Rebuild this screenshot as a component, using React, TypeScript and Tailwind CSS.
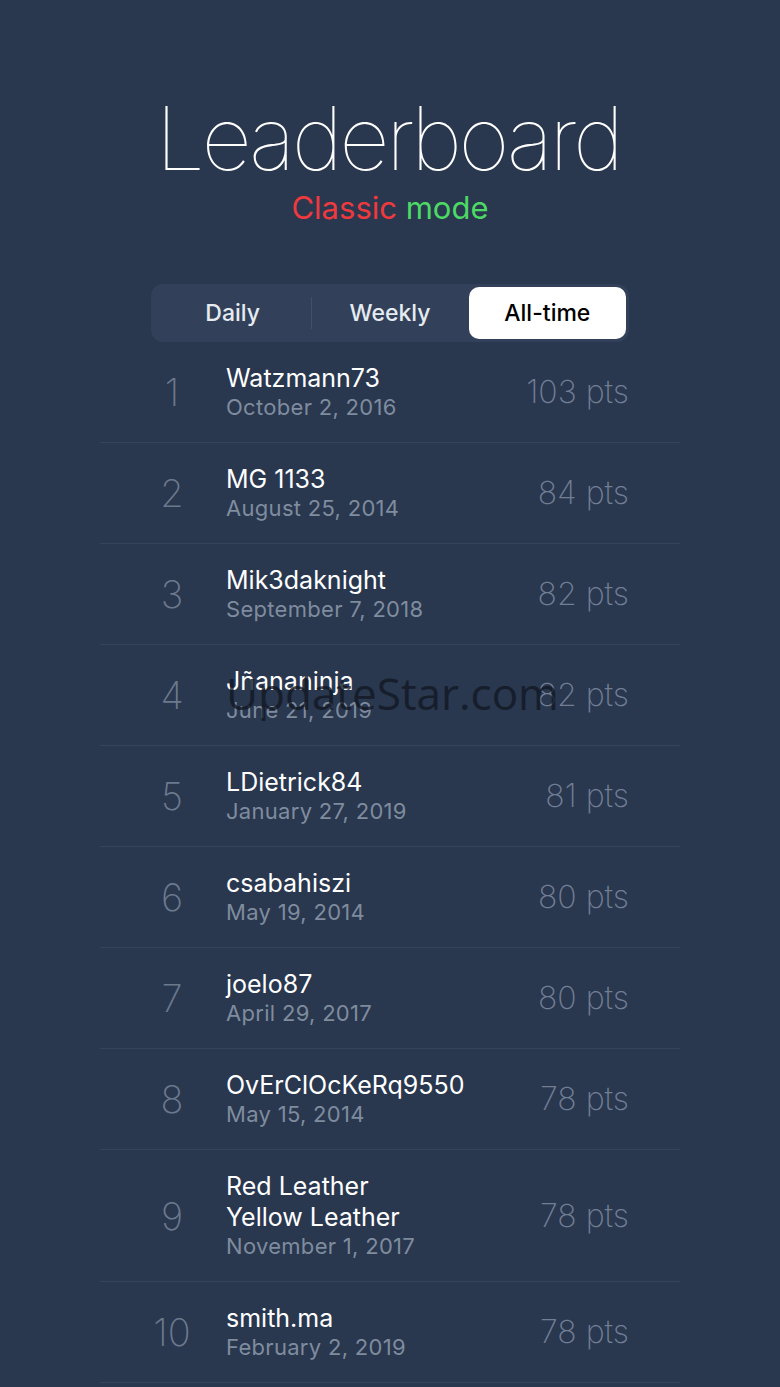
import React from 'react'

type Entry = {
  rank: number
  name: string[]
  date: string
  pts: number
}

const ENTRIES: Entry[] = [
  { rank: 1, name: ['Watzmann73'], date: 'October 2, 2016', pts: 103 },
  { rank: 2, name: ['MG 1133'], date: 'August 25, 2014', pts: 84 },
  { rank: 3, name: ['Mik3daknight'], date: 'September 7, 2018', pts: 82 },
  { rank: 4, name: ['Jñananinja'], date: 'June 21, 2019', pts: 82 },
  { rank: 5, name: ['LDietrick84'], date: 'January 27, 2019', pts: 81 },
  { rank: 6, name: ['csabahiszi'], date: 'May 19, 2014', pts: 80 },
  { rank: 7, name: ['joelo87'], date: 'April 29, 2017', pts: 80 },
  { rank: 8, name: ['OvErClOcKeRq9550'], date: 'May 15, 2014', pts: 78 },
  { rank: 9, name: ['Red Leather', 'Yellow Leather'], date: 'November 1, 2017', pts: 78 },
  { rank: 10, name: ['smith.ma'], date: 'February 2, 2019', pts: 78 },
]

const TABS = ['Daily', 'Weekly', 'All-time']

function Row({ e }: { e: Entry }) {
  return (
    <li className="flex items-center border-b border-[#35435b] pl-[30px] pr-[51px] py-[21px] min-h-[101px]">
      <span className="w-[84px] text-center text-[38px] leading-none font-extralight text-[#6c798d]">
        {e.rank}
      </span>
      <div className="ml-3 flex-1 flex flex-col">
        {e.name.map(n => (
          <span key={n} className="text-[25px] leading-[31px] text-white">
            {n}
          </span>
        ))}
        <span className="text-[22px] leading-[27px] tracking-[0.3px] text-[#7f8c9e]">{e.date}</span>
      </div>
      <span className="text-[32px] leading-none font-extralight text-[#717e94]">{e.pts} pts</span>
    </li>
  )
}

export default function App() {
  return (
    <div
      className="relative min-h-[1387px] w-full bg-[#29374f] overflow-hidden"
      style={{ fontFamily: 'Inter, "Noto Sans", sans-serif' }}
    >
      {/* Header */}
      <div className="flex flex-col items-center pt-[94px]">
        <h1 className="text-[88px] leading-none font-thin text-white tracking-[-3.6px] -translate-x-[2px]">
          Leaderboard
        </h1>
        <p className="mt-[10px] text-[31px] leading-none">
          <span className="text-[#ee3a3e]">Classic</span>{' '}
          <span className="text-[#4cd964]">mode</span>
        </p>
      </div>

      {/* Tabs */}
      <div className="mt-[61px] mx-auto w-[478px] h-[58px] rounded-[12px] bg-[#324159] p-[3px] flex items-stretch">
        {TABS.map((t, i) => {
          const active = t === 'All-time'
          return (
            <div key={t} className="flex-1 flex items-center relative">
              {i === 1 && <span className="absolute left-0 top-[10px] bottom-[10px] w-px bg-[#40506a]" />}
              <button
                className={`w-full h-full rounded-[10px] text-[23px] font-medium ${
                  active ? 'bg-white text-black' : 'text-[#e6ebf2]'
                }`}
              >
                {t}
              </button>
            </div>
          )
        })}
      </div>

      {/* List */}
      <ul className="mx-auto w-[580px]">
        {ENTRIES.map(e => (
          <Row key={e.rank} e={e} />
        ))}
      </ul>

      {/* Watermark */}
      <span
        className="absolute left-[226px] top-[671px] text-[44px] leading-none text-[#121824] opacity-80 pointer-events-none"
        style={{ fontFamily: '"Open Sans", sans-serif' }}
      >
        UpdateStar.com
      </span>
    </div>
  )
}
